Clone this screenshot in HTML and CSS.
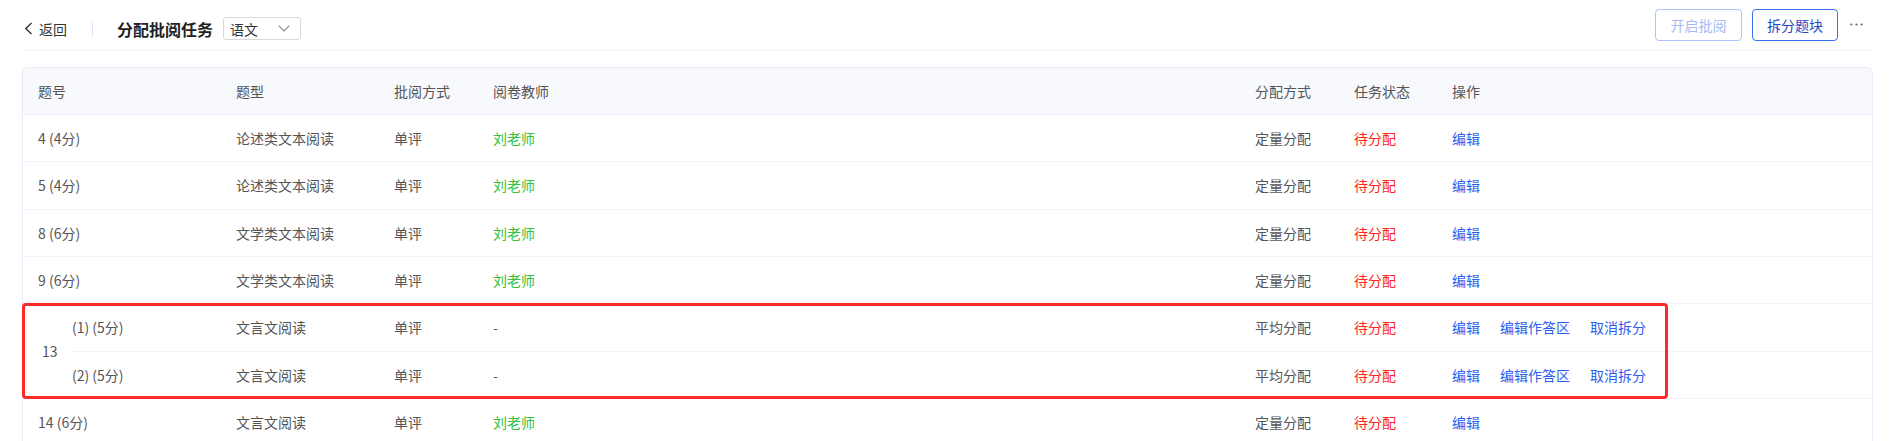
FILE: index.html
```html
<!DOCTYPE html>
<html lang="zh-CN">
<head>
<meta charset="utf-8">
<title>分配批阅任务</title>
<link rel="stylesheet" href="styles.css">
</head>
<body>
<div class="page">
  <header class="topbar">
    <div class="left">
      <a class="back">
        <svg width="9" height="13" viewBox="0 0 9 13"><polyline points="7.5,1 1.8,6.5 7.5,12" fill="none" stroke="#333" stroke-width="1.4"/></svg>
        <span>返回</span>
      </a>
      <span class="divider"></span>
      <h1 class="title">分配批阅任务</h1>
      <div class="select">
        <span>语文</span>
        <svg width="12" height="7" viewBox="0 0 12 7"><polyline points="0.7,0.7 6,6 11.3,0.7" fill="none" stroke="#888" stroke-width="1.1"/></svg>
      </div>
    </div>
    <div class="right">
      <button class="btn btn-disabled">开启批阅</button>
      <button class="btn btn-primary">拆分题块</button>
      <span class="more" aria-label="更多"><svg width="13" height="3" viewBox="0 0 13 3"><circle cx="1.3" cy="1.5" r="1.1" fill="#666"/><circle cx="6.5" cy="1.5" r="1.1" fill="#666"/><circle cx="11.7" cy="1.5" r="1.1" fill="#666"/></svg></span>
    </div>
  </header>

  <div class="table-area">
    <div class="table-wrap">
      <table class="grid">
        <colgroup>
          <col class="c0"><col class="c1"><col class="c2"><col class="c3"><col class="c4"><col class="c5"><col class="c6"><col class="c7">
        </colgroup>
        <thead>
          <tr><th colspan="2">题号</th><th>题型</th><th>批阅方式</th><th>阅卷教师</th><th>分配方式</th><th>任务状态</th><th>操作</th></tr>
        </thead>
        <tbody>
          <tr><td colspan="2">4 (4分)</td><td>论述类文本阅读</td><td>单评</td><td class="green">刘老师</td><td>定量分配</td><td class="red">待分配</td><td class="ops"><a>编辑</a></td></tr>
          <tr><td colspan="2">5 (4分)</td><td>论述类文本阅读</td><td>单评</td><td class="green">刘老师</td><td>定量分配</td><td class="red">待分配</td><td class="ops"><a>编辑</a></td></tr>
          <tr><td colspan="2">8 (6分)</td><td>文学类文本阅读</td><td>单评</td><td class="green">刘老师</td><td>定量分配</td><td class="red">待分配</td><td class="ops"><a>编辑</a></td></tr>
          <tr><td colspan="2">9 (6分)</td><td>文学类文本阅读</td><td>单评</td><td class="green">刘老师</td><td>定量分配</td><td class="red">待分配</td><td class="ops"><a>编辑</a></td></tr>
          <tr><td rowspan="2" class="merged">13</td><td class="sub">(1) (5分)</td><td>文言文阅读</td><td>单评</td><td>-</td><td>平均分配</td><td class="red">待分配</td><td class="ops"><a>编辑</a><a>编辑作答区</a><a>取消拆分</a></td></tr>
          <tr><td class="sub">(2) (5分)</td><td>文言文阅读</td><td>单评</td><td>-</td><td>平均分配</td><td class="red">待分配</td><td class="ops"><a>编辑</a><a>编辑作答区</a><a>取消拆分</a></td></tr>
          <tr><td colspan="2">14 (6分)</td><td>文言文阅读</td><td>单评</td><td class="green">刘老师</td><td>定量分配</td><td class="red">待分配</td><td class="ops"><a>编辑</a></td></tr>
        </tbody>
      </table>
    </div>
    <div class="mark"></div>
  </div>
</div>
</body>
</html>
```

FILE: styles.css
```css
* { box-sizing: border-box; }
html, body { margin: 0; padding: 0; background: #fff; }
body {
  font-family: "Noto Sans CJK SC", "Noto Sans", sans-serif;
  font-size: 14px;
  color: #555;
  overflow: hidden;
}
.page { padding: 0 21px 0 22px; }

.topbar {
  height: 51px;
  border-bottom: 1px solid #eef2fa;
  display: flex;
  align-items: center;
  justify-content: space-between;
}
.left {
  display: flex;
  align-items: center;
  margin-top: 7px;
  padding-left: 2px;
}
.back {
  display: flex;
  align-items: center;
  gap: 6px;
  color: #333;
  line-height: 20px;
}
.divider {
  width: 1px;
  height: 15px;
  background: #dbe4f3;
  margin-left: 25px;
}
.title {
  margin: 0 0 0 24px;
  font-size: 16px;
  font-weight: 700;
  color: #222;
  line-height: 22px;
}
.select {
  margin-left: 10px;
  width: 78px;
  height: 23px;
  border: 1px solid #d9d9d9;
  border-radius: 3px;
  display: flex;
  align-items: center;
  justify-content: space-between;
  padding: 0 10px 0 6px;
  color: #333;
  line-height: 20px;
}
.right {
  display: flex;
  align-items: center;
  gap: 10px;
  padding-right: 10px;
  margin-top: -1px;
}
.btn {
  height: 32px;
  padding: 0;
  width: 87px;
  border-radius: 4px;
  background: #fff;
  font-family: inherit;
  font-size: 14px;
  line-height: 20px;
}
.btn-disabled { border: 1px solid #acc4f8; color: #a4bbf3; }
.btn-primary { border: 1px solid #3a72ee; color: #1f48c4; width: 86px; }
.more { display: flex; align-items: center; margin-left: 2px; height: 13px; }

.table-area { position: relative; margin-top: 16px; }
.table-wrap {
  border: 1px solid #e6ecf9;
  border-bottom: none;
  border-radius: 6px 6px 0 0;
  overflow: hidden;
}
.grid {
  width: 100%;
  border-collapse: separate;
  border-spacing: 0;
  table-layout: fixed;
}
.c0 { width: 49px; }
.c1 { width: 149px; }
.c2 { width: 158px; }
.c3 { width: 99px; }
.c4 { width: 762px; }
.c5 { width: 99px; }
.c6 { width: 98px; }
.c7 { width: auto; }

.grid th {
  height: 47px;
  background: #f8f9fd;
  border-bottom: 1px solid #e6ecf9;
  text-align: left;
  font-weight: 400;
  color: #555;
  padding: 0 0 0 15px;
  line-height: 20px;
}
.grid td {
  height: 47.33px;
  border-bottom: 1px solid #eef2fc;
  padding: 0 0 0 15px;
  line-height: 20px;
  white-space: nowrap;
  color: #555;
}
.grid td.merged { padding-left: 19px; }
.grid td.sub { padding-left: 0; }
.green { color: #34c13c !important; }
.red { color: #ff2424 !important; }
.ops a { color: #2b5ef0; margin-right: 20px; }

.mark {
  position: absolute;
  left: 0;
  top: 236px;
  width: 1646px;
  height: 96px;
  border: 3px solid #fd2a2a;
  border-radius: 4px;
  pointer-events: none;
}
```
